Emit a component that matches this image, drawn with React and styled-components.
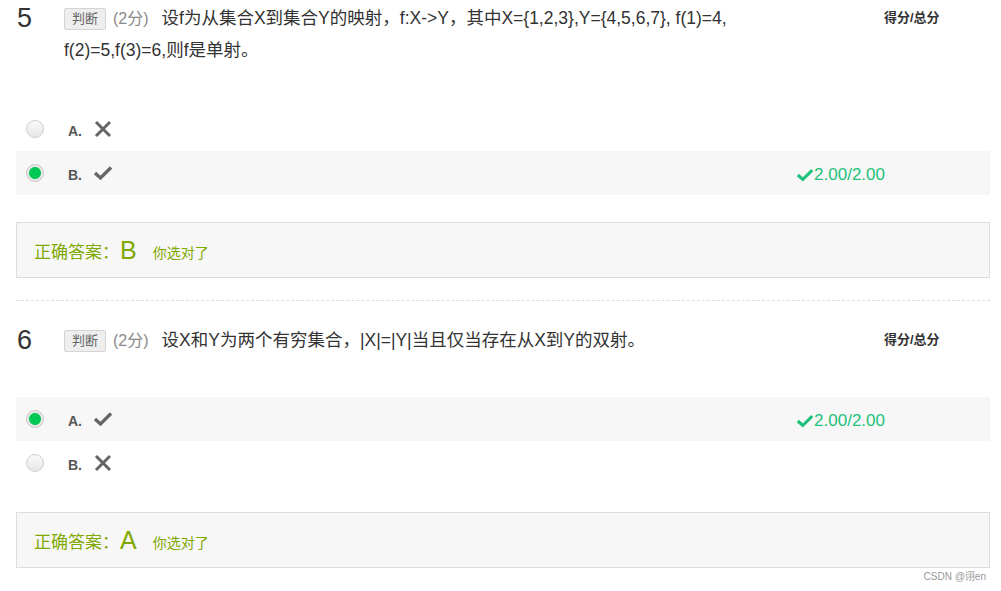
import React from "react";
import styled, { createGlobalStyle } from "styled-components";

const GlobalStyle = createGlobalStyle`
  html, body {
    margin: 0;
    padding: 0;
    background: #fff;
  }
  body {
    font-family: "Liberation Sans", Arial, "Noto Sans CJK SC", sans-serif;
    color: #333;
  }
`;

const Page = styled.div`
  position: relative;
  width: 1001px;
  height: 591px;
  overflow: hidden;
  padding: 0 11px 0 16px;
  box-sizing: border-box;
`;

const Question = styled.div`
  padding-top: ${p => (p.first ? "2px" : "23px")};
  padding-bottom: 22px;
  border-bottom: ${p => (p.last ? "none" : "1px dashed #ddd")};
`;

const Header = styled.div`
  display: flex;
  align-items: flex-start;
`;

const Num = styled.div`
  width: 48px;
  flex: none;
  font-size: 27px;
  line-height: 32px;
  color: #333;
  padding-left: 1px;
  box-sizing: border-box;
`;

const Stem = styled.div`
  width: 720px;
  flex: none;
  font-size: 17.5px;
  line-height: 32px;
  color: #333;
`;

const Tag = styled.span`
  display: inline-block;
  font-size: 13px;
  line-height: 20px;
  padding: 0 7px;
  color: #666;
  background: #eee;
  border: 1px solid #d4d4d4;
  border-radius: 2px;
  margin-right: 7px;
  vertical-align: 1px;
`;

const Points = styled.span`
  color: #888;
  font-size: 16px;
  line-height: 1;
  margin-right: 13px;
`;

const ScoreHead = styled.div`
  margin-left: 100px;
  font-size: 13px;
  font-weight: bold;
  line-height: 32px;
  color: #333;
`;

const Options = styled.div`
  margin-top: 41px;
`;

const Option = styled.div`
  display: flex;
  align-items: center;
  height: 44px;
  background: ${p => (p.shaded ? "#f7f7f7" : "transparent")};
`;

const Radio = styled.span`
  width: 16px;
  height: 16px;
  border-radius: 50%;
  margin-left: 10px;
  flex: none;
  border: 1px solid ${p => (p.checked ? "#c8c8c8" : "#cfcfcf")};
  background: ${p =>
    p.checked
      ? "radial-gradient(circle, #00c853 0 5.5px, #e8e8e8 6.5px)"
      : "linear-gradient(#fafafa, #e6e6e6)"};
`;

const Label = styled.span`
  margin-left: 24px;
  width: 25px;
  font-size: 14px;
  font-weight: bold;
  color: #555;
  padding-top: 3px;
`;

const Mark = styled.svg`
  display: block;
  flex: none;
`;

const Score = styled.span`
  margin-left: auto;
  margin-right: 105px;
  display: flex;
  align-items: center;
  color: #1dc27a;
  font-size: 17px;
  padding-top: 3px;
`;

const AnswerBox = styled.div`
  margin-top: 27px;
  height: 54px;
  border: 1px solid #ddd;
  background: #f7f7f7;
  display: flex;
  align-items: center;
  padding-left: 17px;
  color: #7fa800;
`;

const AnswerLabel = styled.span`
  font-size: 17px;
`;

const AnswerKey = styled.span`
  font-size: 25px;
  margin-left: 1px;
  margin-right: 16px;
`;

const Verdict = styled.span`
  font-size: 14px;
  padding-top: 3px;
`;

const Watermark = styled.div`
  position: absolute;
  right: 15px;
  bottom: 8px;
  font-size: 10px;
  color: #999;
`;

function Cross() {
  return (
    <Mark width="20" height="20" viewBox="0 0 20 20">
      <path d="M3 3 L17 17 M17 3 L3 17" stroke="#666" strokeWidth="3" />
    </Mark>
  );
}

function Tick({ color = "#666", size = 20 }) {
  return (
    <Mark width={size} height={size} viewBox="0 0 20 20">
      <path
        d="M2 10 L7.5 15 L18 4.5"
        stroke={color}
        strokeWidth="3.4"
        fill="none"
      />
    </Mark>
  );
}

const questions = [
  {
    no: 5,
    text:
      "设f为从集合X到集合Y的映射，f:X->Y，其中X={1,2,3},Y={4,5,6,7}, f(1)=4, f(2)=5,f(3)=6,则f是单射。",
    options: [
      { label: "A.", mark: "x", checked: false },
      { label: "B.", mark: "v", checked: true },
    ],
    answer: "B",
  },
  {
    no: 6,
    text: "设X和Y为两个有穷集合，|X|=|Y|当且仅当存在从X到Y的双射。",
    options: [
      { label: "A.", mark: "v", checked: true },
      { label: "B.", mark: "x", checked: false },
    ],
    answer: "A",
  },
];

export default function App() {
  return (
    <Page>
      <GlobalStyle />
      {questions.map((q, qi) => (
        <Question key={q.no} first={qi === 0} last={qi === questions.length - 1}>
          <Header>
            <Num>{q.no}</Num>
            <Stem>
              <Tag>判断</Tag>
              <Points>(2分)</Points>
              {q.text}
            </Stem>
            <ScoreHead>得分/总分</ScoreHead>
          </Header>
          <Options>
            {q.options.map(o => (
              <Option key={o.label} shaded={o.checked}>
                <Radio checked={o.checked} />
                <Label>{o.label}</Label>
                {o.mark === "x" ? <Cross /> : <Tick />}
                {o.checked && (
                  <Score>
                    <Tick color="#1dc27a" size={18} />
                    2.00/2.00
                  </Score>
                )}
              </Option>
            ))}
          </Options>
          <AnswerBox>
            <AnswerLabel>正确答案：</AnswerLabel>
            <AnswerKey>{q.answer}</AnswerKey>
            <Verdict>你选对了</Verdict>
          </AnswerBox>
        </Question>
      ))}
      <Watermark>CSDN @诩en</Watermark>
    </Page>
  );
}
